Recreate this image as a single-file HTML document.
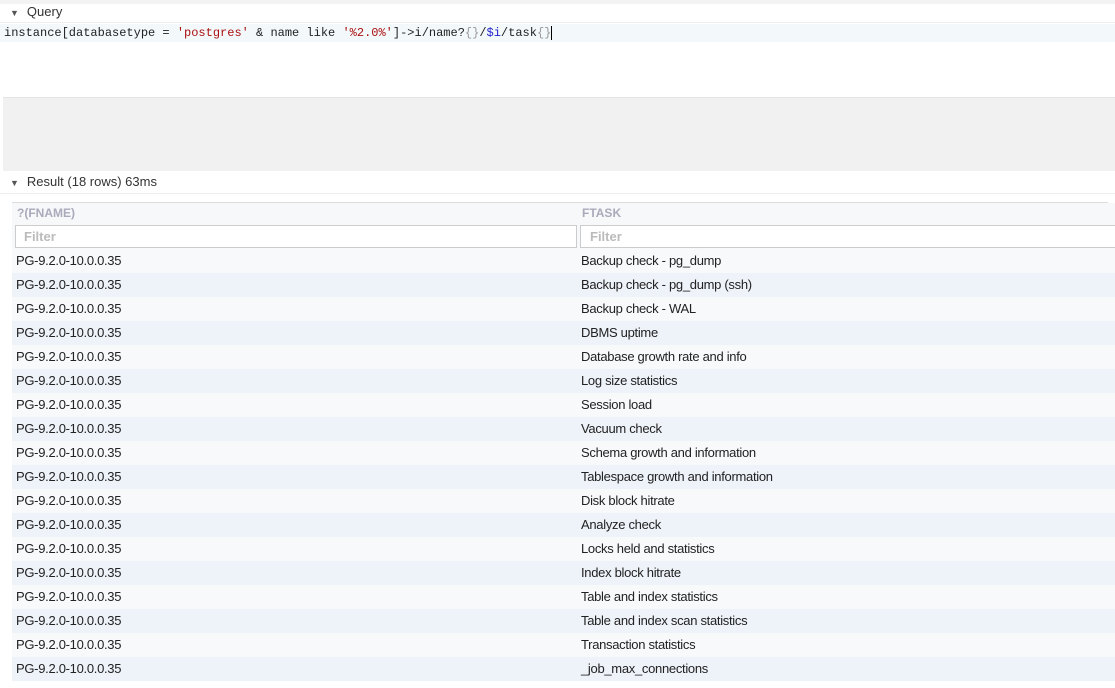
<!DOCTYPE html>
<html><head><style>
*{box-sizing:border-box;margin:0;padding:0}
body{width:1115px;height:688px;background:#fff;font-family:"Liberation Sans",sans-serif;position:relative;overflow:hidden;color:#333}
.abs{position:absolute}
.hdr{font-size:13px;color:#333}
.tri{font-size:9px;color:#555;margin-right:8px}
.code{font-family:"Liberation Mono",monospace;font-size:12px;color:#222}
.row{position:absolute;left:12px;width:1103px;height:24px;font-size:13px;color:#222;letter-spacing:-0.3px}
.row span{position:absolute;top:4px}
</style></head><body>
<div class="abs" style="left:0;top:0;width:1115px;height:4px;background:#f3f3f3"></div>
<div class="abs hdr" style="left:10px;top:4px;line-height:16px"><span class="tri">▼</span>Query</div>
<div class="abs" style="left:0;top:22px;width:1115px;height:1px;background:#eee"></div>
<div class="abs" style="left:0;top:24px;width:1115px;height:18px;background:#f3f8fb"></div>
<div class="abs code" style="left:4px;top:26px;line-height:15px;white-space:pre">instance[databasetype = <span style="color:#a11">'postgres'</span> &amp; name like <span style="color:#a11">'%2.0%'</span>]-&gt;i/name?<span style="color:#999">{}</span>/<span style="color:#22c">$i</span>/task<span style="color:#999">{}</span><span style="border-left:1px solid #000"></span></div>
<div class="abs" style="left:3px;top:97px;width:1112px;height:74px;background:#f1f1f1;border-top:1px solid #e4e4e4"></div>
<div class="abs hdr" style="left:10px;top:174px;line-height:16px"><span class="tri">▼</span>Result (18 rows) 63ms</div>
<div class="abs" style="left:0;top:193px;width:1115px;height:1px;background:#eee"></div>
<div class="abs" style="left:12px;top:202px;width:1096px;height:1px;background:#ddd"></div>
<div class="abs" style="left:12px;top:203px;width:1103px;height:46px;background:#f7f8fa"></div>
<div class="abs" style="left:17px;top:206px;font-size:12px;font-weight:bold;color:#aab">?(FNAME)</div>
<div class="abs" style="left:582px;top:206px;font-size:12px;font-weight:bold;color:#aab">FTASK</div>
<div class="abs" style="left:15px;top:225px;width:562px;height:23px;background:#fff;border:1px solid #ccc"></div>
<div class="abs" style="left:580px;top:225px;width:540px;height:23px;background:#fff;border:1px solid #ccc"></div>
<div class="abs" style="left:24px;top:229px;font-size:13px;font-weight:bold;color:#bbb">Filter</div>
<div class="abs" style="left:590px;top:229px;font-size:13px;font-weight:bold;color:#bbb">Filter</div>
<div class="abs" style="left:577px;top:249px;width:1px;height:432px;background:#e6e8ec"></div>
<div id="rows"></div>
<script>
var t=["Backup check - pg_dump","Backup check - pg_dump (ssh)","Backup check - WAL","DBMS uptime","Database growth rate and info","Log size statistics","Session load","Vacuum check","Schema growth and information","Tablespace growth and information","Disk block hitrate","Analyze check","Locks held and statistics","Index block hitrate","Table and index statistics","Table and index scan statistics","Transaction statistics","_job_max_connections"];
var h="";for(var i=0;i<t.length;i++){h+='<div class="row" style="top:'+(249+i*24)+'px;background:'+(i%2?'#eef2f9':'#f7f9fb')+'"><span style="left:4px">PG-9.2.0-10.0.0.35</span><span style="left:569px">'+t[i]+'</span></div>';}
document.getElementById("rows").innerHTML=h;
</script>
</body></html>
